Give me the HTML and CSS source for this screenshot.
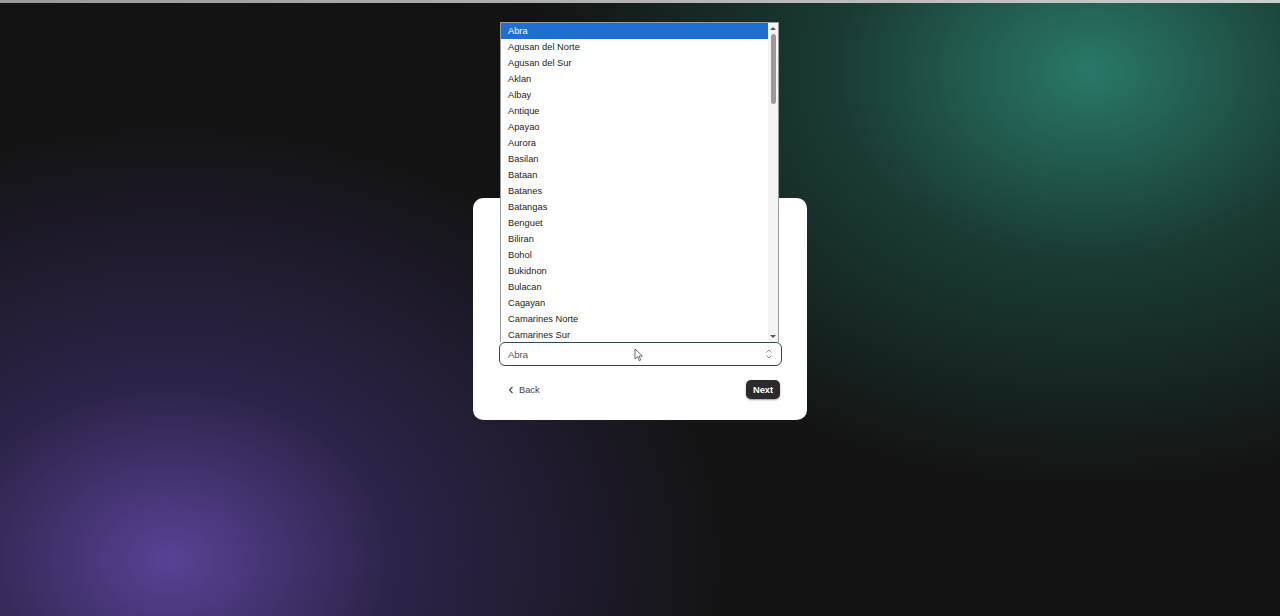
FILE: index.html
```html
<!DOCTYPE html>
<html>
<head>
    <title>Select province</title>
    <meta charset="utf-8">
    <meta name="viewport" content="width=device-width, initial-scale=1">
    <link rel="stylesheet" href="styles.css">
</head>
<body>
<div class="top-strip"></div>
<div class="stage">
    <div class="card">
        <div class="card-body"></div>
        <div class="select-wrap">
            <div class="select">
                <span>Abra</span>
                <svg class="chevrons" width="8" height="10" viewBox="0 0 8 10">
                    <path d="M1.5 3.5 L4 1 L6.5 3.5 M1.5 6.5 L4 9 L6.5 6.5" fill="none" stroke="#888" stroke-width="1"/>
                </svg>
            </div>
            <!-- open native dropdown -->
            <div class="dropdown">
                <ul class="options">
                    <li class="selected">Abra</li>
                    <li>Agusan del Norte</li>
                    <li>Agusan del Sur</li>
                    <li>Aklan</li>
                    <li>Albay</li>
                    <li>Antique</li>
                    <li>Apayao</li>
                    <li>Aurora</li>
                    <li>Basilan</li>
                    <li>Bataan</li>
                    <li>Batanes</li>
                    <li>Batangas</li>
                    <li>Benguet</li>
                    <li>Biliran</li>
                    <li>Bohol</li>
                    <li>Bukidnon</li>
                    <li>Bulacan</li>
                    <li>Cagayan</li>
                    <li>Camarines Norte</li>
                    <li>Camarines Sur</li>
                </ul>
                <div class="scrollbar">
                    <span class="arrow up"></span>
                    <span class="thumb"></span>
                    <span class="arrow down"></span>
                </div>
            </div>
            <svg class="cursor" width="10" height="14" viewBox="0 0 10 14">
                <path d="M1 1 L1 11 L3.5 8.7 L5.3 12.6 L6.8 11.9 L5 8.1 L8.4 8.1 Z" fill="#fff" stroke="#444" stroke-width="0.8"/>
            </svg>
        </div>
        <div class="actions">
            <a class="back" href="#">
                <svg width="6" height="8" viewBox="0 0 6 8"><path d="M4.5 1 L1.5 4 L4.5 7" fill="none" stroke="#444" stroke-width="1.1"/></svg>
                Back
            </a>
            <button class="next">Next</button>
        </div>
    </div>
</div>
</body>
</html>
```

FILE: styles.css
```css
/* Page */
body {
    font-family: 'Liberation Sans', Arial, sans-serif;
    margin: 0;
    height: 616px;
    overflow: hidden;
    background-color: #131313;
    background-image:
        radial-gradient(ellipse 560px 440px at 170px 560px, rgba(92, 68, 156, 0.95), rgba(62, 46, 108, 0.6) 40%, rgba(19, 19, 19, 0) 100%),
        radial-gradient(ellipse 560px 420px at 1090px 70px, rgba(42, 126, 108, 0.95), rgba(30, 86, 74, 0.6) 45%, rgba(19, 19, 19, 0) 100%);
}

.top-strip {
    height: 3px;
    background: linear-gradient(to right, #9a9a9a, #b8b8b8 60%, #c8d0cc);
}

.stage {
    display: flex;
    justify-content: center;
    padding: 195px 0 0 0;
}

/* Card */
.card {
    width: 334px;
    height: 222px;
    background-color: #fff;
    border-radius: 10px;
    box-sizing: border-box;
    padding: 0 25px 0 26px;
    display: flex;
    flex-direction: column;
}

.card-body {
    height: 144px;
}

.select-wrap {
    position: relative;
}

.select {
    height: 24px;
    box-sizing: border-box;
    border: 1.5px solid #2f4a4a;
    border-radius: 6px;
    display: flex;
    align-items: center;
    justify-content: space-between;
    padding: 0 8px 0 8px;
    font-size: 9.5px;
    color: #555;
}

/* Open dropdown list */
.dropdown {
    position: absolute;
    left: 1px;
    bottom: 24px;
    width: 279px;
    height: 320px;
    box-sizing: border-box;
    background-color: #fff;
    border: 1px solid #9a9a9a;
    border-bottom: none;
    display: flex;
}

.options {
    list-style: none;
    margin: 0;
    padding: 0;
    flex: 1;
}

.options li {
    height: 16px;
    line-height: 16px;
    padding-left: 7px;
    font-size: 9.3px;
    color: #222;
}

.options li.selected {
    background-color: #1f6fd1;
    color: #fff;
}

.scrollbar {
    width: 10px;
    display: flex;
    flex-direction: column;
    align-items: center;
    background-color: #f4f4f4;
}

.arrow {
    width: 0;
    height: 0;
    border-left: 3px solid transparent;
    border-right: 3px solid transparent;
}

.arrow.up {
    margin-top: 4px;
    border-bottom: 3px solid #555;
}

.arrow.down {
    margin-top: auto;
    margin-bottom: 4px;
    border-top: 3px solid #555;
}

.thumb {
    width: 5px;
    height: 70px;
    margin-top: 4px;
    border-radius: 3px;
    background-color: #9a9a9a;
}

.cursor {
    position: absolute;
    left: 135px;
    top: 6px;
}

/* Back / Next */
.actions {
    display: flex;
    justify-content: space-between;
    align-items: center;
    margin-top: 14px;
    padding-left: 9px;
    padding-right: 2px;
}

.back {
    display: flex;
    align-items: center;
    gap: 5px;
    font-size: 9.3px;
    color: #444;
    text-decoration: none;
}

.next {
    background-color: #2b2b2b;
    color: #fff;
    border: none;
    border-radius: 5px;
    height: 19px;
    width: 34px;
    padding: 0;
    font-family: inherit;
    font-size: 9.3px;
    font-weight: bold;
    box-shadow: 0 1px 2px rgba(0, 0, 0, 0.4);
}
```
